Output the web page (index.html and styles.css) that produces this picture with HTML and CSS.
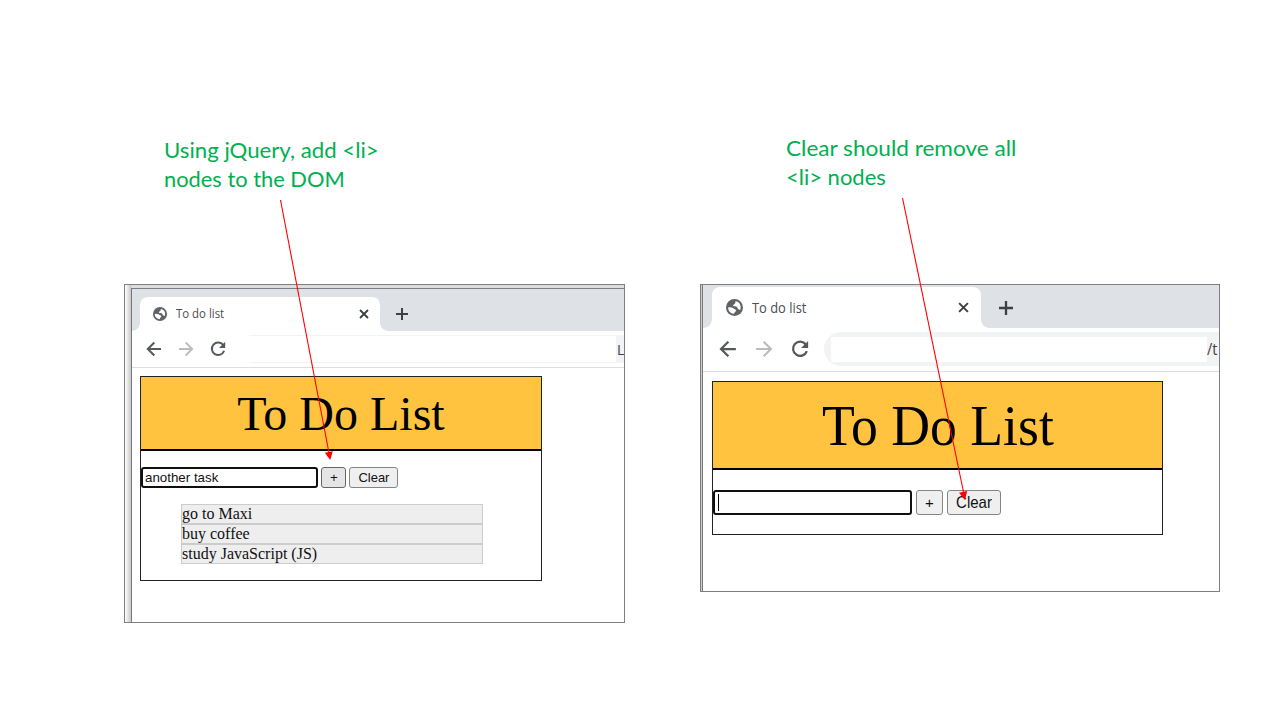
FILE: index.html
```html
<!DOCTYPE html>
<html lang="en">
<head>
<meta charset="utf-8">
<title>To do list exercise</title>
<link rel="stylesheet" href="styles.css">
</head>
<body>
<svg class="defs" width="0" height="0">
  <symbol id="globe" viewBox="0 0 16 16">
    <circle cx="8" cy="8" r="8" fill="#5f6368"/>
    <path d="M9 2.2C10.6 2.3 12.2 3.2 13 4.7 14 6.4 14.1 8.6 13.3 10.3 12.2 10.4 11.9 9.5 11.2 9.2 10.7 7.2 9.6 6.9 7.4 6.9 6.4 6.6 6.6 5.5 7.4 5.1 8.7 4.8 8.7 3.5 9 2.2Z" fill="#fff"/>
    <path d="M2.1 7.7 5.4 8C7.2 8.3 7.4 9.6 8.8 9.8 10 10.1 9.7 11.6 8.6 12 8 12.4 8.2 13.3 7.4 13.9 4.2 13.6 1.8 10.9 2.1 7.7Z" fill="#fff"/>
  </symbol>
  <symbol id="back" viewBox="0 0 16 16"><path d="M15 8H2M8.3 1.5 1.8 8l6.5 6.5" fill="none" stroke="currentColor" stroke-width="2"/></symbol>
  <symbol id="forward" viewBox="0 0 16 16"><path d="M1 8h13M7.7 1.5 14.2 8l-6.5 6.5" fill="none" stroke="currentColor" stroke-width="1.8"/></symbol>
  <symbol id="reload" viewBox="0 0 16 16"><path d="M13.2 4A6.3 6.3 0 1 0 14.1 9.8" fill="none" stroke="currentColor" stroke-width="2"/><path d="M15.2.8V7H9Z" fill="currentColor"/></symbol>
  <symbol id="close" viewBox="0 0 10 10"><path d="m1 1 8 8M9 1 1 9" stroke="currentColor" stroke-width="1.8"/></symbol>
  <symbol id="plus" viewBox="0 0 12 12"><path d="M6 0v12M0 6h12" stroke="currentColor" stroke-width="2"/></symbol>
</svg>
<main class="slide">
  <section class="example add">
    <p class="note"><span class="n1">Using jQuery, add &lt;li&gt;</span><br><span class="n2">nodes to the DOM</span></p>
    <div class="frame">
      <div class="browser">
        <div class="tabs">
          <div class="tab"><svg class="globe"><use href="#globe"/></svg><span class="name">To do list</span><svg class="close"><use href="#close"/></svg></div>
          <svg class="new"><use href="#plus"/></svg>
        </div>
        <div class="toolbar">
          <svg><use href="#back"/></svg><svg class="off"><use href="#forward"/></svg><svg><use href="#reload"/></svg>
          <div class="address"><div class="blank"></div><span class="url">L</span></div>
        </div>
        <div class="page">
          <div class="app">
            <h1><span>To Do List</span></h1>
            <div class="form"><div class="field"><span>another task</span></div><div class="btn hot">+</div><div class="btn clear"><span>Clear</span></div></div>
            <ul><li>go to Maxi</li><li>buy coffee</li><li>study JavaScript (JS)</li></ul>
          </div>
        </div>
      </div>
    </div>
  </section>
  <section class="example reset">
    <p class="note"><span class="n1">Clear should remove all</span><br><span class="n2">&lt;li&gt; nodes</span></p>
    <div class="frame">
      <div class="browser">
        <div class="tabs">
          <div class="tab"><svg class="globe"><use href="#globe"/></svg><span class="name">To do list</span><svg class="close"><use href="#close"/></svg></div>
          <svg class="new"><use href="#plus"/></svg>
        </div>
        <div class="toolbar">
          <svg><use href="#back"/></svg><svg class="off"><use href="#forward"/></svg><svg><use href="#reload"/></svg>
          <div class="address"><div class="blank"></div><span class="url">/t</span></div>
        </div>
        <div class="page">
          <div class="app">
            <h1><span>To Do List</span></h1>
            <div class="form"><div class="field"><i class="caret"></i></div><div class="btn">+</div><div class="btn clear"><span>Clear</span></div></div>
          </div>
        </div>
      </div>
    </div>
  </section>
  <svg class="arrows" viewBox="0 0 1280 720">
    <g stroke="#f00" fill="#f00" stroke-width="1.1">
      <path d="M280.5 200 329 453"/><path d="m324.8 452.8 8-1.5-2.6 8.6Z" stroke="none"/>
      <path d="M902.5 198 963.7 493"/><path d="m959 492.8 8.2-1.7-2.3 9Z" stroke="none"/>
    </g>
  </svg>
</main>
</body>
</html>
```
FILE: styles.css
```css
* { box-sizing: border-box; }
body { margin: 0; background: #fff; }
.defs { position: absolute; }
.slide { position: relative; width: 1280px; height: 720px; overflow: hidden; display: flex; align-items: flex-start; gap: 75px; padding: 133px 0 0 124px; }
.arrows { position: absolute; inset: 0; width: 1280px; height: 720px; }
.note { margin: 0; padding-left: 40px; font: 22px/29px Lato, sans-serif; color: #00b050; white-space: nowrap; }
.note span, h1 span, .name, .btn span, .field span { display: inline-block; transform-origin: 0 50%; white-space: nowrap; }
.frame { border: 1px solid #7f7f7f; overflow: hidden; display: flex; }
.browser { flex: 1; display: flex; flex-direction: column; min-width: 0; background: #fff; }
.tabs { background: #dee1e6; display: flex; align-items: flex-end; flex: none; }
.tab { position: relative; background: #fff; border-radius: 8px 8px 0 0; display: flex; align-items: center; flex: none; }
.tab::before, .tab::after { content: ""; position: absolute; bottom: 0; width: 8px; height: 8px; }
.tab::before { left: -8px; background: radial-gradient(circle at 0 0, transparent 7.5px, #fff 8px); }
.tab::after { right: -8px; background: radial-gradient(circle at 100% 0, transparent 7.5px, #fff 8px); }
.name { font-family: "Open Sans", sans-serif; color: #4b4e53; }
.close, .new { color: #3c4043; flex: none; }
.close { margin-left: auto; }
.toolbar { display: flex; align-items: center; color: #55585d; border-bottom: 1px solid #dcdee0; flex: none; }
.toolbar svg { flex: none; }
.toolbar .off { color: #babcbe; }
.address { flex: 1; background: #f1f3f4; display: flex; align-items: center; min-width: 0; }
.blank { background: #fff; flex: none; }
.url { font-family: "Open Sans", sans-serif; color: #3c4043; }
.app { border: 1px solid #222; }
h1 { margin: 0; background: #ffc340; border-bottom: 2px solid #000; font-family: "Liberation Serif", serif; font-weight: 400; text-align: center; color: #000; }
.form { display: flex; font-family: "Liberation Sans", sans-serif; color: #111; }
.field { border: 2px solid #101010; border-radius: 3px; background: #fff; display: flex; align-items: center; }
.btn { border: 1px solid #858585; border-radius: 3px; background: #efefef; display: flex; align-items: center; justify-content: center; }
.btn.hot { background: #e5e5e5; border-color: #666; }
.btn.clear span { transform-origin: 50% 50%; }
ul { list-style: none; margin: 16px 58px 16px 40px; padding: 0; font: 16px/18px "Liberation Serif", serif; color: #111; }
li { border: 1px solid #ccc; background: #eee; height: 20px; }

.add { width: 501px; padding-top: 2px; }
.add .note { height: 149px; }
.add .n1 { transform: scaleX(1.01); }
.add .n2 { transform: scaleX(.993); }
.add .frame { height: 339px; padding: 3px 0 0 6px; background: linear-gradient(90deg, #fff, #c8c8c8 6px, #ddd 7px); }
.add .browser { border-left: 1px solid #777; border-top: 1px solid #7b7e82; }
.add .tabs { height: 42px; padding-left: 8px; }
.add .tab { width: 240px; height: 34px; padding: 0 11px 0 13px; }
.add .globe { width: 14px; height: 14px; }
.add .name { margin: -1px 0 0 9px; font-size: 12px; transform: scaleX(.95); }
.add .close { width: 10px; height: 10px; }
.add .new { width: 12px; height: 12px; margin: 0 0 11px 16px; }
.add .toolbar { height: 37px; padding-left: 14px; gap: 16px; }
.add .toolbar svg { width: 16px; height: 16px; }
.add .address { height: 28px; margin-left: -2px; background: linear-gradient(90deg, #fff 7px, #f1f3f4 12px); }
.add .address::before { content: ""; width: 1px; height: 11px; background: #eee; margin-right: 5px; }
.add .blank { width: 371px; height: 26px; }
.add .url { font-size: 14px; margin-left: 1px; }
.add .page { padding: 8px 0 0 8px; }
.add .app { width: 402px; height: 205px; }
.add h1 { height: 74px; font-size: 48px; line-height: 73px; }
.add .form { margin-top: 16px; height: 21px; font-size: 13.333px; }
.add .field { width: 177px; padding-left: 2px; }
.add .btn { width: 25px; margin-left: 3.4px; }
.add .btn.clear { width: 48.5px; margin-left: 3px; }
.add .btn span { transform: scaleX(.97); }

.reset { width: 520px; }
.reset .note { height: 151px; padding-left: 86px; }
.reset .n1 { transform: scaleX(1.027); }
.reset .frame { height: 308px; padding-left: 1px; background: #ccc; }
.reset .browser { border-left: 1px solid #777; }
.reset .tabs { height: 43px; padding-left: 9px; }
.reset .tab { width: 269px; height: 41px; padding: 0 12px 0 14px; }
.reset .globe { width: 17px; height: 17px; }
.reset .name { margin-left: 9px; font-size: 14px; transform: scaleX(.92); }
.reset .close { width: 11px; height: 11px; }
.reset .new { width: 14px; height: 14px; margin: 0 0 13px 18px; }
.reset .toolbar { height: 44px; padding-left: 16px; gap: 18px; }
.reset .toolbar svg { width: 18px; height: 18px; margin-top: -1px; }
.reset .address { height: 34px; margin: -1px 0 0 -3px; border-radius: 17px 0 0 17px; padding-left: 7px; }
.reset .blank { width: 376px; height: 25px; }
.reset .url { font-size: 16px; transform: scaleX(.9); transform-origin: 0 50%; }
.reset .page { padding: 9px 0 0 9px; }
.reset .app { width: 451px; height: 154px; }
.reset h1 { height: 88px; font-size: 54px; line-height: 89px; }
.reset h1 span { transform: translateX(1px) scale(.994, 1.07); }
.reset .form { margin-top: 20px; height: 25px; font-size: 15px; }
.reset .field { width: 199px; padding-left: 3px; }
.reset .btn { width: 27px; margin-left: 4px; }
.reset .btn.clear { width: 54px; }
.reset .btn span { transform: scaleY(1.08); }
.caret { width: 1px; height: 17px; background: #000; }
```
